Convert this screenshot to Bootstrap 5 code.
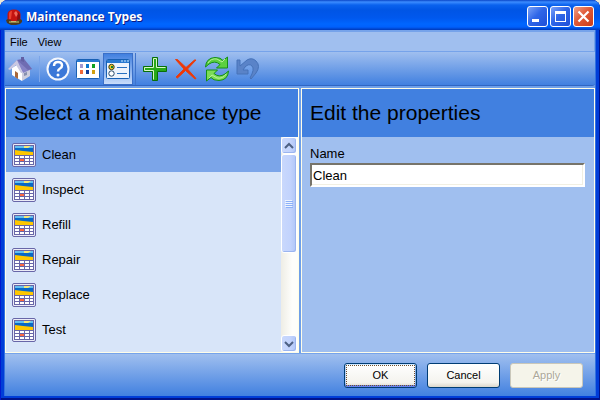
<!DOCTYPE html>
<html lang="en">
<head>
<meta charset="utf-8">
<meta name="viewport" content="width=device-width, initial-scale=1">
<title>Maintenance Types</title>
<link href="https://cdn.jsdelivr.net/npm/bootstrap@5.3.0/dist/css/bootstrap.min.css" rel="stylesheet">
<style>
body{font-family:"Liberation Sans",Arial,sans-serif;font-size:11px;line-height:14px;color:#000;background:#ece9d8}
button{font-family:inherit;color:inherit}
.win{background:#003dd8;border-radius:8px 8px 0 0;padding:0 4px 4px 4px;box-shadow:inset 1px 0 #0019cf,inset -1px 0 #00138c,inset 0 -2px #00138c}
.titlebar{height:30px;margin:0 -4px;padding:3px 6px 0 6px;border-radius:8px 8px 0 0;background:linear-gradient(#0a46c8 0,#3c8cff 2px,#0a62ee 5px,#0055e5 10px,#0058ee 18px,#0066ff 24px,#0060fc 27px,#0038b8 30px)}
.titlebar h1{font:bold 12px/18px "Open Sans","Noto Sans",sans-serif;color:#fff;text-shadow:1px 1px #0a1883}
.captions{gap:2px}
.capbtn{width:21px;height:21px;padding:0;border:1px solid #fff;border-radius:3px;background:linear-gradient(135deg,#7ba2f8,#2f66e8 45%,#1f4fd8)}
.capbtn.exit{background:linear-gradient(135deg,#f0a088,#e05a38 45%,#cc3c18)}
.capbtn svg,.tool svg{display:block}
.shell{background:#6f9fe8;border:solid #3272e0;border-width:0 1px}
.menus{height:22px;background:#a0bfef;border:solid #76a3ea;border-width:2px 1px 1px 0}
.menus button{border:0;background:none;padding:3px 5px}
.tools{height:34px;background:linear-gradient(#a0bfef,#4180e0);border-bottom:1px solid #2f66c4;border-radius:0 0 3px 0}
.edits{gap:1px}
.tool{width:30px;height:32px;padding:0;border:0;background:none}
.tool svg{margin:auto}
.tool.pressed{background:linear-gradient(#4180e0,#c8dcfa);border:1px solid #3a6fc8;border-radius:0}
.rule{width:1px;height:26px;margin:0 3px;background:#7ba5e9}
.rule.full{height:32px;margin:0 4px 0 2px;background:#3f74cc}
.panes{gap:2px;padding-top:2px;background:#6f9fe8}
.pane{flex:1 1 0;min-width:0;border:1px solid #fffde8;background:#a0bfef}
.pane h2{font-size:21px;line-height:48px;padding:0 8px;background:#4180e0;white-space:nowrap}
.types{background:#d8e5f9;font-size:13px}
.types button{height:35px;gap:6px;padding:0 6px;border:0;background:none}
.types button.chosen{background:#7ba5e9}
.scroller{width:17px;background:linear-gradient(90deg,#eeede5,#fefefb 70%);border-right:1px solid #fffff4}
.scroller button,.thumb{border:1px solid #fff;border-radius:3px;padding:0;background:linear-gradient(90deg,#c9d8fc,#c2d3fd 60%,#b0c6f7);box-shadow:inset -1px -1px #9bb5ef}
.scroller button{height:17px}
.scroller svg{display:block;margin:auto}
.thumb{height:99px}
.fields{font-size:13px;padding:9px 9px 0 8px}
.fields label{line-height:15px;margin-bottom:2px}
.fields input{height:24px;padding:0 1px;font-size:13px;border:2px solid;border-color:#77746a #fff #fff #77746a;box-shadow:inset -1px -1px #f1efe2;background:#fff;color:#000}
.foot{height:43px;gap:10px;padding:0 12px 0 0;background:linear-gradient(#a0bfef,#4180e0);border-top:1px solid #76a3ea}
.push{width:73px;height:25px;padding:0;border:1px solid #003c74;border-radius:3px;background:linear-gradient(#fff,#f4f3ee 80%,#dcd7cb)}
.push.main{box-shadow:inset 0 1px #cee7ff,inset 0 -2px #6982ee,inset 1px 0 #bcd4f6,inset -1px 0 #89ade4}
.push.main span{display:block;height:21px;line-height:19px;margin:0 1px;border:1px dotted #70502a}
.push:disabled{color:#aca899;background:#f5f4ea;border-color:#c9c7ba;text-shadow:1px 1px #fff}
</style>
</head>
<body>
<svg class="d-none" aria-hidden="true">
<symbol id="calendar" viewBox="0 0 24 24">
<rect x=".5" y=".5" width="23" height="23" rx="1.5" fill="#ececf7" stroke="#6866a8"/>
<path d="M2 2h20v20H2z" fill="#6866a8"/><path d="M3 3h18v2H3z" fill="#64c0f0"/><path d="M12 3h7l-3 2h-4z" fill="#f4e878"/><path d="M3 5h18v4H3z" fill="#0868c8"/><path d="M3 7l8 1 10 1v3H3z" fill="#ffc800"/>
<path d="M3 13h4v2H3zm5 0h4v2H8zm5 0h4v2h-4zm5 0h3v2h-3zM3 16h4v2H3zm10 0h4v2h-4zm5 0h3v2h-3zM3 19h4v2H3zm5 0h4v2H8zm5 0h4v2h-4zm5 0h3v2h-3z" fill="#fff"/><path d="M8 16h4v2H8z" fill="#ff6840"/>
</symbol>
</svg>
<main class="win d-flex flex-column vh-100">
<header class="titlebar d-flex align-items-center">
<svg class="me-1" width="16" height="16" viewBox="0 0 16 16"><path d="M1.500 12V5Q2 .5 8 .5T14.500 5v7z" fill="#c41410"/><path d="M3 10V5q0-3 3-3l-1 8z" fill="#e84030"/><path d="M8 4l2-2 2 3-2 3z" fill="#f06858"/><path d="M12 3l2 3v5h-3z" fill="#8c0c10"/><path d="M0 11l2-1 4 2h4l4-2 2 1v2l-2 2-4 1H5l-4-2z" fill="#4c3a20"/><path d="M3 12h10v2H3z" fill="#8c8448"/><path d="M5 12h5v1H5z" fill="#c0b878"/></svg>
<h1 class="m-0 me-auto">Maintenance Types</h1>
<div class="captions d-flex">
<button class="capbtn" aria-label="Minimize"><svg width="19" height="19"><path d="M4 12h7v3H4z" fill="#fff"/></svg></button>
<button class="capbtn" aria-label="Maximize"><svg width="19" height="19"><path d="M4 4h11v11H4zm1 3v7h9V7z" fill="#fff" fill-rule="evenodd"/></svg></button>
<button class="capbtn exit" aria-label="Close"><svg width="19" height="19"><path d="M4.500 4.500l10 10m0-10l-10 10" stroke="#fff" stroke-width="2.200"/></svg></button>
</div>
</header>
<div class="shell d-flex flex-column flex-grow-1">
<nav class="menus d-flex align-items-center"><button>File</button><button>View</button></nav>
<div class="tools d-flex align-items-center" role="toolbar" aria-label="Actions">
<button class="tool" aria-label="Home"><svg width="26" height="26" viewBox="0 0 26 26"><path d="M6 12v7l9 5 7-4v-9l-6-6z" fill="#f4f4f6"/><path d="M15 17l8-4v7l-8 5z" fill="#cccddd"/><path d="M5 12l5-3 5 7v9l-10-6z" fill="#fff"/><path d="M1 13L10 4l7-1 8 10-9 4-5-9z" fill="#8683c6"/><path d="M10 4l7-1 8 10-4 1z" fill="#6f6cb2"/><path d="M1 13l9-9 6 13-2 0-5-8-6 5z" fill="#c9c8e2"/><path d="M14 1h3v5l-3-1z" fill="#6260a4"/><path d="M8 15l3 2v6l-3-2z" fill="#a8683c"/><path d="M17 17l3-1v3l-3 1z" fill="#8790b0"/></svg></button>
<span class="rule ms-1"></span>
<button class="tool" aria-label="Help"><svg width="24" height="24" viewBox="0 0 24 24"><circle cx="12" cy="12" r="11.500" fill="#f4f7fd"/><circle cx="12" cy="12" r="9.500" fill="#3b78d8"/><path d="M8 9q0-4 4-4t4 3.500q0 2-2 3t-2 3" fill="none" stroke="#fff" stroke-width="2.500"/><circle cx="12" cy="18" r="1.500" fill="#fff"/></svg></button>
<button class="tool" aria-label="Icon view"><svg width="24" height="20" viewBox="0 0 24 20"><rect x=".5" y=".5" width="23" height="19" rx="1" fill="#fff" stroke="#1860b4"/><path d="M1 1h22v2H1z" fill="#2878d0"/><path d="M4 5h3v4H4z" fill="#a098d0"/><path d="M10 5h3v4h-3z" fill="#0878d0"/><path d="M16 5h3v4h-3z" fill="#10a020"/><path d="M4 11h3v4H4z" fill="#f06838"/><path d="M10 11h3v4h-3z" fill="#103c98"/><path d="M16 11h3v4h-3z" fill="#d0a010"/></svg></button>
<button class="tool pressed" aria-label="Properties view" aria-pressed="true"><svg width="24" height="20" viewBox="0 0 24 20"><rect x=".5" y=".5" width="23" height="19" rx="1" fill="#edf3fc" stroke="#1860b4"/><path d="M1 1h22v3H1z" fill="#2878d0"/><path d="M15 1h2v2h-2zm3 0h2v2h-2zm3 0h2v2h-2z" fill="#78b0e8"/><circle cx="5.500" cy="8" r="2.700" fill="#f0c830" stroke="#403c10"/><path d="M5 7h2v2H5z" fill="#108030"/><circle cx="5.500" cy="14.500" r="2.700" fill="#fff" stroke="#284868"/><path d="M11 8.500h10M11 14.500h10" stroke="#2870c0"/></svg></button>
<span class="rule full"></span>
<div class="edits d-flex">
<button class="tool" aria-label="Add"><svg width="24" height="24" viewBox="0 0 24 24"><path d="M9.500.5h5v9h9v5h-9v9h-5v-9h-9v-5h9z" fill="#28a818" stroke="#087008"/><path d="M10.500 22.500v-9h-9v-3h9v-9h3v9h9" fill="none" stroke="#d8f4c8"/></svg></button>
<button class="tool" aria-label="Delete"><svg width="24" height="24" viewBox="0 0 24 24"><path d="M1.500 2.500h2l8.500 8 8.500-7.500h1.500l-8.500 9 8.500 9.500-1 .5-9.500-8.500-8 7.500-1.500-1 8-8z" fill="#f03408" stroke="#e8400c"/></svg></button>
<button class="tool" aria-label="Refresh"><svg width="26" height="26" viewBox="0 0 26 26"><path d="M1.500 11Q2 2 11 1.500q6 0 8 3L23.500 1v11h-11l3.500-3.500Q11 4 5 8z" fill="#5cd040" stroke="#149014"/><path d="M24.500 15q-.5 9-9.500 9.500-6 0-8-3L2.500 25V14h11L10 17.500q5 4.500 11 .5z" fill="#7cdc58" stroke="#149014"/><path d="M4 7q3-5 9-4l5 3 3-3M22 18q-3 5-9 4l-5-3-3 3" fill="none" stroke="#b8f098"/></svg></button>
<button class="tool" aria-label="Undo" disabled><svg width="24" height="22" viewBox="0 0 24 22"><path d="M1 2h3v6l7-6q5-3 9 1 5 5 0 12l-5 6-1-1q5-9 2-12t-7 1l-2 3h5v4H1z" fill="#5a83c8" stroke="#4672b8"/></svg></button>
</div>
</div>
<div class="panes d-flex flex-grow-1">
<section class="pane d-flex flex-column">
<h2 class="m-0 fw-normal">Select a maintenance type</h2>
<div class="types d-flex flex-grow-1">
<div class="flex-grow-1 d-flex flex-column">
<button class="chosen d-flex align-items-center"><svg width="24" height="24"><use href="#calendar"/></svg>Clean</button>
<button class="d-flex align-items-center"><svg width="24" height="24"><use href="#calendar"/></svg>Inspect</button>
<button class="d-flex align-items-center"><svg width="24" height="24"><use href="#calendar"/></svg>Refill</button>
<button class="d-flex align-items-center"><svg width="24" height="24"><use href="#calendar"/></svg>Repair</button>
<button class="d-flex align-items-center"><svg width="24" height="24"><use href="#calendar"/></svg>Replace</button>
<button class="d-flex align-items-center"><svg width="24" height="24"><use href="#calendar"/></svg>Test</button>
</div>
<div class="scroller d-flex flex-column">
<button class="d-block w-100" aria-label="Scroll up"><svg width="10" height="8"><path d="M1 6l4-4 4 4" fill="none" stroke="#4d6185" stroke-width="2"/></svg></button>
<div class="thumb d-flex align-items-center"><svg width="8" height="8"><path d="M0 .5h7m-7 2h7m-7 2h7m-7 2h7" stroke="#eef4fe"/><path d="M1 1.500h7m-7 2h7m-7 2h7m-7 2h7" stroke="#8cb0f8"/></svg></div>
<button class="d-block w-100 mt-auto" aria-label="Scroll down"><svg width="10" height="8"><path d="M1 2l4 4 4-4" fill="none" stroke="#4d6185" stroke-width="2"/></svg></button>
</div>
</div>
</section>
<section class="pane">
<h2 class="m-0 fw-normal">Edit the properties</h2>
<form class="fields"><label class="d-block" for="name">Name</label><input class="d-block w-100" id="name" type="text" value="Clean"></form>
</section>
</div>
<footer class="foot d-flex align-items-center justify-content-end">
<button class="push main"><span>OK</span></button><button class="push">Cancel</button><button class="push" disabled>Apply</button>
</footer>
</div>
</main>
<script src="https://cdn.jsdelivr.net/npm/bootstrap@5.3.0/dist/js/bootstrap.bundle.min.js"></script>
</body>
</html>
